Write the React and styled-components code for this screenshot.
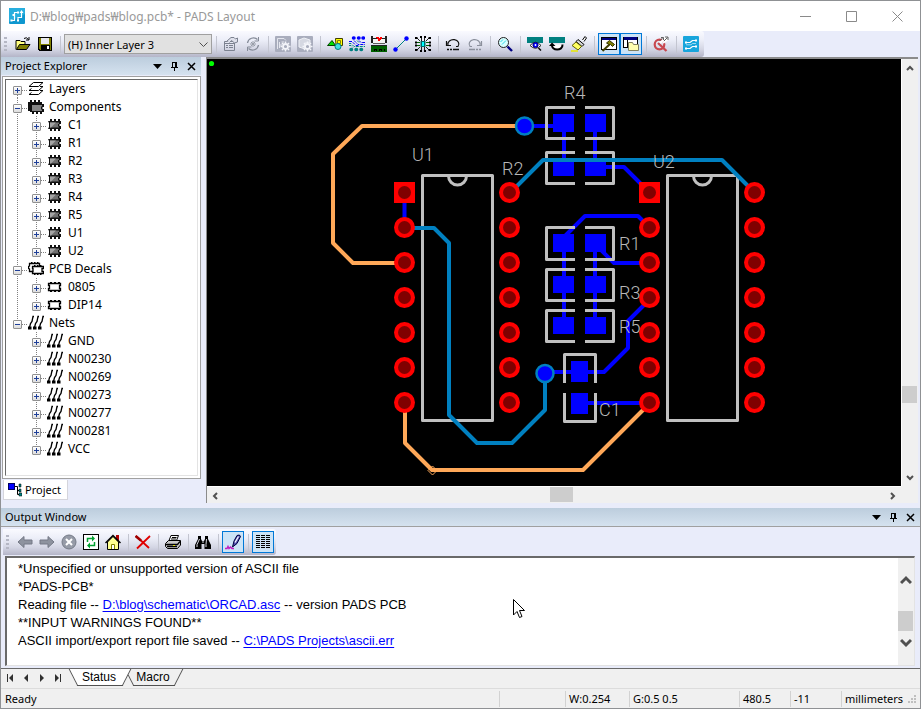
import React from 'react';
import styled, { createGlobalStyle } from 'styled-components';

const GlobalStyle = createGlobalStyle`
  * {
    box-sizing: border-box;
  }
  body {
    margin: 0;
    font-family: "Noto Sans", "Noto Sans CJK KR", sans-serif;
    font-size: 11px;
    color: #000000;
    background: #8f9194;
  }
  button {
    font: inherit;
    color: inherit;
    padding: 0;
    border: none;
    background: none;
  }
`;

const Window = styled.div`
  display: flex;
  flex-direction: column;
  min-height: 100vh;
  border: 1px solid #8f9194;
  background: #e9ecfa;
`;

/* ---------- title bar ---------- */

const TitleBar = styled.header`
  display: flex;
  align-items: center;
  height: 30px;
  padding-left: 8px;
  background: #ffffff;
`;

const Title = styled.h1`
  flex: 1;
  margin: 0 0 0 5px;
  font-size: 12px;
  font-weight: normal;
  color: #999999;
`;

const CaptionButton = styled.button`
  display: flex;
  align-items: center;
  justify-content: center;
  width: 46px;
  height: 30px;
  color: #8a8a8a;
`;

/* ---------- toolbars ---------- */

const ToolbarRow = styled.div`
  display: flex;
  height: 26px;
`;

const Toolbar = styled.div`
  display: flex;
  align-items: center;
  height: 26px;
  padding: 0 2px 0 3px;
  border-radius: 0 3px 3px 0;
  background: linear-gradient(#fafaff 0%, #eceef8 35%, #d4d6e4 70%, #b4b5c8 100%);
`;

const Grip = styled.span`
  width: 3px;
  height: 15px;
  margin: 0 5px 0 0;
  background: repeating-linear-gradient(#b5b7c4 0 2px, transparent 2px 4px);
`;

const ToolButton = styled.button`
  display: flex;
  align-items: center;
  justify-content: center;
  width: 22px;
  height: 22px;
  border: 1px solid ${props => (props.$pressed ? '#0078d7' : 'transparent')};
  background: ${props => (props.$pressed ? '#cce4f7' : 'transparent')};
`;

const Separator = styled.span`
  width: 1px;
  height: 17px;
  margin: 0 3px 0 4px;
  background: #c3c5d0;
`;

const LayerSelect = styled.select`
  width: 148px;
  height: 20px;
  padding: 0 20px 0 3px;
  border: 1px solid #a0a0a0;
  border-radius: 0;
  font: 11px "Noto Sans", sans-serif;
  color: #000000;
  appearance: none;
  background: #e1e1e1;
`;

const SelectBox = styled.label`
  display: grid;
  align-items: center;
  & > * {
    grid-area: 1 / 1;
  }
  & > svg {
    justify-self: end;
    margin-right: 4px;
    pointer-events: none;
  }
`;

/* ---------- docked panels ---------- */

const Workspace = styled.div`
  display: flex;
  flex: 1;
`;

const Explorer = styled.aside`
  display: flex;
  flex-direction: column;
  width: 200px;
  margin-right: 5px;
`;

const PanelHeader = styled.div`
  display: flex;
  align-items: center;
  height: 18px;
  padding: 0 1px 0 4px;
  background: linear-gradient(#bccddd, #d5e2ef);
`;

const PanelTitle = styled.h2`
  flex: 1;
  margin: 0;
  font-size: 11px;
  font-weight: normal;
  line-height: 16px;
`;

const PanelButton = styled.button`
  display: flex;
  align-items: center;
  justify-content: center;
  width: 17px;
  height: 17px;
`;

const TreeFrame = styled.div`
  flex: 1;
  margin: 1px 0 0 1px;
  padding: 2px;
  border: 1px solid #a0a0a0;
  background: #ffffff;
`;

const TreeList = styled.ul`
  height: 100%;
  margin: 0;
  padding: 0 0 0 2px;
  list-style: none;
  border: 1px solid #e3e3e3;
  border-top-color: #696969;
  border-left-color: #696969;
`;

const TreeRow = styled.li`
  display: flex;
  align-items: center;
  height: 18px;
  font-size: 12px;
  line-height: 18px;
`;

const dots = 'repeating-linear-gradient(#808080 0 1px, transparent 1px 2px)';
const dotsAcross = 'repeating-linear-gradient(90deg, #808080 0 1px, transparent 1px 2px)';

const Guide = styled.span`
  width: 19px;
  height: 18px;
  background: ${props => (props.$empty ? 'none' : `${dots} 9px 0 / 1px 18px no-repeat`)};
`;

const Branch = styled.span`
  display: flex;
  align-items: center;
  justify-content: center;
  width: 19px;
  height: 18px;
  margin-right: 1px;
  background:
    ${dotsAcross} 14px 10px / 5px 1px no-repeat,
    ${dots} 9px ${props => (props.$first ? 9 : 0)}px / 1px
      ${props => (props.$first || props.$last ? 9 : 18)}px no-repeat;
`;

const Expander = styled.button`
  display: flex;
  width: 9px;
  height: 9px;
  margin-top: 2px;
  border: 1px solid #919191;
  border-radius: 1px;
  background: linear-gradient(#ffffff, #dcdcdc);
`;

const TreeLabel = styled.span`
  margin-left: 5px;
`;

const ExplorerTabs = styled.div`
  display: flex;
  height: 24px;
  padding: 1px 0 3px 2px;
`;

const ExplorerTab = styled.button`
  display: flex;
  align-items: center;
  gap: 3px;
  width: 65px;
  padding-left: 4px;
  border: 1px solid #d5d5dc;
  border-top: none;
  background: #ffffff;
`;

/* ---------- board view ---------- */

const BoardFrame = styled.main`
  display: grid;
  grid-template-columns: 1fr 17px;
  grid-template-rows: 1fr 17px;
  flex: 1;
  min-width: 0;
  min-height: 440px;
  margin-right: 2px;
  border: 1px solid #8b8b8b;
  border-width: 2px 0 0 1px;
  background: #f0f0f0;
`;

const Board = styled.svg`
  display: block;
  width: 100%;
  height: 100%;
  background: #000000;
`;

const Silk = styled.text`
  font-family: Roboto, sans-serif;
  font-weight: 300;
  font-size: 18px;
  fill: #b8b8b8;
  stroke: none;
`;

const Scrollbar = styled.div`
  display: flex;
  flex-direction: ${props => (props.$across ? 'row' : 'column')};
  background: #f0f0f0;
  ${props => (props.$across ? 'border-top: 1px solid #ffffff;' : 'width: 17px; border-left: 1px solid #ffffff;')}
`;

const ScrollButton = styled.button`
  display: flex;
  align-items: center;
  justify-content: center;
  width: 16px;
  height: 17px;
  color: #505050;
`;

const ScrollGap = styled.span`
  flex: ${props => props.$share};
`;

const Thumb = styled.span`
  flex: 0 0 ${props => props.$size}px;
  ${props => (props.$across ? 'height: 15px;' : 'width: 15px;')}
  background: #cdcdcd;
`;

/* ---------- output window ---------- */

const Output = styled.section`
  margin-top: 5px;
`;

const OutputBody = styled.div`
  padding: 2px 5px 2px 2px;
  border-top: 1px solid #a0a0a0;
`;

const OutputFrame = styled.div`
  display: flex;
  height: 110px;
  margin: 1px 0 0 2px;
  border: 2px solid #696969;
  border-right: 1px solid #e3e3e3;
  border-bottom: 1px solid #e3e3e3;
  background: #ffffff;
`;

const Log = styled.div`
  flex: 1;
  padding: 2px 0 0 11px;
  font-family: "Liberation Sans", Arial, sans-serif;
  font-size: 13px;
  line-height: 18px;
`;

const LogLine = styled.p`
  margin: 0;
`;

const LogLink = styled.a`
  color: #0000ff;
  text-decoration: underline;
  text-underline-offset: 2px;
`;

const OutputScroll = styled(Scrollbar)`
  padding: 13px 0 14px;
`;

const TabStrip = styled.div`
  display: flex;
  height: 21px;
  padding-left: 1px;
  border-top: 1px solid #696969;
  border-bottom: 1px solid #dcdcdc;
  background: #f0f0f0;
`;

const TabNav = styled.button`
  display: flex;
  align-items: center;
  justify-content: center;
  width: 16px;
  height: 17px;
  color: #303030;
`;

const Tab = styled.button`
  position: relative;
  z-index: ${props => (props.$active ? 2 : 1)};
  width: ${props => (props.$active ? 56 : 52)}px;
  height: 16px;
  margin-left: ${props => (props.$active ? 5 : 0)}px;
  font-family: "Liberation Sans", Arial, sans-serif;
  font-size: 12px;
  line-height: 14px;

  &::before,
  &::after {
    content: "";
    position: absolute;
    z-index: -1;
    top: 0;
    height: 16px;
    border-bottom: 1px solid #505050;
    background: ${props => (props.$active ? '#ffffff' : '#f0f0f0')};
  }
  &::before {
    left: 2px;
    right: 40%;
    border-left: 1px solid #505050;
    transform: skewX(27deg);
  }
  &::after {
    left: 40%;
    right: 0;
    border-right: 1px solid #505050;
    transform: skewX(-27deg);
  }
`;

const StatusBar = styled.footer`
  display: flex;
  align-items: center;
  height: 19px;
  padding: 0 2px 0 4px;
  background: #f0f0f0;
`;

const StatusText = styled.span`
  flex: 1;
`;

const StatusCell = styled.span`
  width: ${props => props.$width}px;
  height: 16px;
  padding-left: 3px;
  border-left: 1px solid #d2d2d2;
  line-height: 16px;
  white-space: nowrap;
`;

const Pointer = styled.svg`
  position: absolute;
  left: 513px;
  top: 599px;
`;

/* ---------- icons ---------- */

const Icon = ({ size = 16, children, ...rest }) => (
  <svg width={size} height={size} viewBox={`0 0 ${size} ${size}`} fill="none" aria-hidden="true" {...rest}>
    {children}
  </svg>
);

const AppIcon = () => (
  <Icon>
    <rect width="16" height="16" rx="1" fill="#0e97cf" />
    <path d="M0 0H16V6L0 14Z" fill="#27aede" />
    <path d="M2 12.500H5.500V4.500H9M9 12.500V9.500H12.500V4" stroke="#ffffff" strokeWidth="1.200" />
    <path d="M10.500 5L12.500 2L14.500 5ZM3.500 6H5V8H3.500Z" fill="#ffffff" />
    <path d="M8 3.500H10V5.500H8ZM1.500 11.500H3.500V13.500H1.500ZM8 11.500H10V13.500H8Z" fill="#ffffff" />
  </Icon>
);

const OpenIcon = () => (
  <Icon>
    <path d="M1 13.500V4.500H5L6 5.500H10V8" fill="#ffff80" stroke="#000000" />
    <path d="M1.500 13.500L4.500 8.500H15L11.500 13.500Z" fill="#808000" stroke="#000000" />
    <path d="M9 2.500Q11.500 0.500 13.500 3.500M14 1V4H11" stroke="#000000" />
  </Icon>
);

const SaveIcon = () => (
  <Icon shapeRendering="crispEdges">
    <path d="M1 1H15V15H2L1 14Z" fill="#000000" />
    <path d="M2 2H4V8H12V2H14V14H3L2 13Z" fill="#808000" />
    <rect x="4" y="2" width="8" height="6" fill="#e8e8ee" />
    <rect x="4" y="9" width="9" height="5" fill="#000000" />
    <rect x="10" y="10" width="2" height="3" fill="#ffffff" />
  </Icon>
);

const PropsIcon = () => (
  <Icon>
    <path d="M1.500 5.500H11.500V14.500H1.500ZM1.500 7.500H11M3 9.500H5M6 9.500H10M3 11.500H5M6 11.500H10" stroke="#7c8290" />
    <path d="M4 5L8 1.500H11L12.500 3L14.500 2V6L11.500 7L8.500 4.500L6.500 6.500" fill="#dfe1ec" stroke="#7c8290" />
  </Icon>
);

const CycleIcon = () => (
  <Icon>
    <path d="M2.500 7A6 6 0 0 1 12.500 3.500M13.500 9A6 6 0 0 1 3.500 12.500" stroke="#858b98" strokeWidth="1.300" />
    <path d="M13.500 1V5H9.500M2.500 15V11H6.500" stroke="#858b98" />
    <path d="M8 5V11M5 8H11M6 6L10 10M10 6L6 10" stroke="#9a9faa" />
  </Icon>
);

const GearDocIcon = ({ box }) => (
  <Icon>
    <rect width="16" height="16" rx="1" fill="#a9adbd" />
    {box
      ? <path d="M2 4L7 2L13 4V7H8V13L2 11Z" fill="#d5d8e2" stroke="#eef0f6" />
      : <path d="M2.500 13V2.500H9L11 4.500M4.500 12V6M6.500 6H9M4.500 9H7" stroke="#e4e6ee" />}
    <circle cx="10.500" cy="10.500" r="2.500" fill="#a9adbd" stroke="#f4f5fa" strokeWidth="1.800" />
    <path d="M10.500 5.500V7M10.500 14V15.500M5.500 10.500H7M14 10.500H15.500M7 7L8 8M13 13L14 14M14 7L13 8M7 14L8 13" stroke="#f4f5fa" strokeWidth="1.500" />
  </Icon>
);

const ShapesIcon = () => (
  <Icon>
    <path d="M8.500 2.500H15.500V9.500H9Z" fill="#ffff00" stroke="#404000" />
    <path d="M10.500 4.500H13.500V7.500H10.500Z" stroke="#808000" />
    <path d="M0.500 9.500L5 4.500L8.500 9.500Z" fill="#00e000" stroke="#004000" />
    <circle cx="11" cy="10.500" r="3" fill="#40e0e0" stroke="#008080" />
  </Icon>
);

const RouteIcon = () => (
  <Icon>
    <path d="M4.500 2H5M9.500 2H10M14 2H14.500" stroke="#0000ff" strokeWidth="3.500" strokeLinecap="round" />
    <path d="M2 13.500H2.500M7 13.500H7.500M12 13.500H12.500" stroke="#008080" strokeWidth="3.500" strokeLinecap="round" />
    <path d="M0 5.500H3L7 9.500H10M5 4.500L9 8.500H16M10 4.500L12 6.500H16" stroke="#0000ff" strokeDasharray="3 1" />
    <path d="M0 7.500H2L5 10.500H16M0 9.500H2L4 11.500M8 4.500L10 6.500" stroke="#008080" strokeDasharray="3 1" />
  </Icon>
);

const LayersBoardIcon = () => (
  <Icon shapeRendering="crispEdges">
    <path d="M0 0H2V2H14V0H16V7H14V3H2V7H0Z" fill="#202020" />
    <path d="M2 3H14V7H2Z" fill="#f4f4f4" />
    <path d="M2 7H14V8H2Z" fill="#606060" />
    <path d="M5 1H7L8 2L9 1H11V2L9 4V5H7V4L5 2Z" fill="#ff0000" />
    <rect y="10" width="16" height="6" fill="#006000" />
    <path d="M3 15V13H5V15M8 15V13H10V15M13 13V15" stroke="#000000" />
    <path d="M0 9.500H16" stroke="#202020" />
  </Icon>
);

const ConnectIcon = () => (
  <Icon>
    <path d="M3 13L13 3" stroke="#008080" />
    <circle cx="2.500" cy="13.500" r="2.200" fill="#0000ff" />
    <circle cx="13.500" cy="2.500" r="2.200" fill="#0000ff" />
  </Icon>
);

const FanoutIcon = () => (
  <Icon>
    <path d="M5 5L2 2M6.500 5V1M9.500 5V1M11 5L14 2M5 11L2 14M6.500 11V15M9.500 11V15M11 11L14 14" stroke="#202020" />
    <path d="M5 6.500H1M5 9.500H1M11 6.500H15M11 9.500H15" stroke="#006000" />
    <path d="M0 1H2.500V3H0ZM13.500 1H16V3H13.500ZM0 13H2.500V15H0ZM13.500 13H16V15H13.500ZM0 5.500H2V7.500H0ZM0 8.500H2V10.500H0ZM14 5.500H16V7.500H14ZM14 8.500H16V10.500H14ZM5 0H7V2H5ZM9 0H11V2H9ZM5 14H7V16H5ZM9 14H11V16H9Z" fill="#000000" />
    <rect x="5.500" y="5" width="5" height="6" fill="#006868" />
    <rect x="7" y="6" width="2" height="4" fill="#00ffff" />
  </Icon>
);

const UndoIcon = ({ flip }) => (
  <Icon>
    <g transform={flip ? 'translate(16 0) scale(-1 1)' : undefined} stroke={flip ? '#8b909c' : '#101010'}>
      <path d="M3 9A5.500 4.500 0 1 1 13 10.500H11" strokeWidth="1.200" />
      <path d="M1.500 5V9.500H6" strokeWidth="1.200" />
      <path d="M2 13.500H4M5 13.500H7M8 13.500H14" strokeWidth="1.500" />
    </g>
  </Icon>
);

const ZoomIcon = () => (
  <Icon>
    <circle cx="6.500" cy="6.500" r="5" fill="#d8ffff" stroke="#202020" />
    <path d="M3.500 6L6 3.500M5 8.500L9 4.500" stroke="#30d8e8" />
    <path d="M10.500 10.500L15 15" stroke="#000080" strokeWidth="2.400" />
  </Icon>
);

const ViewBoardIcon = () => (
  <Icon>
    <path d="M0 1H16V7H0Z" fill="#008080" />
    <path d="M3 9.500Q8.500 3 14 9.500Q8.500 15 3 9.500Z" fill="#ffffff" stroke="#202020" />
    <circle cx="8.500" cy="9" r="2.600" fill="#0000ff" stroke="#000080" />
    <circle cx="8.500" cy="9" r="0.900" fill="#ffffff" />
    <path d="M11.500 12L14 14.500" stroke="#000000" strokeWidth="1.500" />
  </Icon>
);

const RotateBoardIcon = () => (
  <Icon>
    <path d="M0 1H16V7H0Z" fill="#008080" />
    <path d="M3 8.500C2 15 14 15.500 13.500 8.500" fill="#ffffff" stroke="#000000" strokeWidth="2" />
    <path d="M0 10L3 6.500L6.500 10Z" fill="#000000" />
  </Icon>
);

const BrushIcon = () => (
  <Icon>
    <path d="M11.500 4L14 0.500L15.500 2L13 5.500" fill="#ffffff" stroke="#000000" />
    <path d="M7 3.500L13 8.500L11 10.500L5 5.500Z" fill="#d8d8d8" stroke="#000000" />
    <path d="M5 6L10.500 10.500L7 14L1 9.500Z" fill="#ffff60" stroke="#606000" />
    <path d="M0 15H7" stroke="#e8e800" strokeWidth="1.500" />
  </Icon>
);

const HammerIcon = () => (
  <Icon>
    <rect x="0.500" y="1.500" width="15" height="12" fill="#ffffff" stroke="#000000" />
    <rect x="1" y="2" width="14" height="2" fill="#000080" />
    <path d="M5.500 7L8.500 4.500L13.500 8.500L11.500 10.500L9.500 8.500L8 8.500Z" fill="#808000" stroke="#303000" />
    <path d="M8.500 8.500L1.500 15" stroke="#404000" strokeWidth="2" />
  </Icon>
);

const ExplorerIcon = () => (
  <Icon>
    <rect x="0.500" y="1.500" width="14" height="10" fill="#ffffff" stroke="#000000" />
    <rect x="1" y="1" width="13" height="3" fill="#000080" />
    <path d="M4.500 4V11" stroke="#000000" />
    <path d="M5.500 14.500V6.500H9.500L10.500 8.500H15.500V14.500Z" fill="#ffffb0" stroke="#808060" />
  </Icon>
);

const QuickIcon = () => (
  <Icon>
    <circle cx="6.500" cy="8.500" r="4.800" stroke="#c84850" strokeWidth="2.200" />
    <path d="M5 7L13.500 15" stroke="#c84850" strokeWidth="2.400" />
    <path d="M7 7L13 1.500M10 7L15 3" stroke="#ffffff" strokeWidth="2" />
    <path d="M6.500 5L10 1.500M8 1.500H10.500V4M11 5L14.500 1.500M12 1H15V4" stroke="#606060" />
  </Icon>
);

const RouterIcon = () => (
  <Icon>
    <rect width="16" height="16" rx="1" fill="#18a5dc" />
    <path d="M3 6.500H7L9.500 4.500H13M3 12.500H7L9.500 10.500H13" stroke="#ffffff" strokeWidth="1.200" />
    <path d="M3 8.800H8L9.500 7.500H13" stroke="#bfe6f6" strokeWidth="0.800" />
    <path d="M2 5.500H4V7.500H2ZM12 3.500H14V5.500H12ZM2 11.500H4V13.500H2ZM12 9.500H14V11.500H12Z" fill="#ffffff" />
  </Icon>
);

const ArrowIcon = ({ flip }) => (
  <Icon>
    <path
      d="M1 8L7 2.500V6H15V10H7V13.500Z"
      fill="#8e939f"
      stroke="#747986"
      transform={flip ? 'translate(16 0) scale(-1 1)' : undefined}
    />
  </Icon>
);

const StopIcon = () => (
  <Icon>
    <circle cx="8" cy="8" r="7" fill="#969ba7" stroke="#757b87" />
    <path d="M5 5L11 11M11 5L5 11" stroke="#ffffff" strokeWidth="2" />
  </Icon>
);

const ReloadIcon = () => (
  <Icon>
    <rect x="0.500" y="0.500" width="15" height="15" fill="#ffffff" stroke="#000000" />
    <path d="M4.500 8V4.500H10M11.500 8V11.500H6" stroke="#00a030" strokeWidth="1.500" />
    <path d="M9 1.500L12 4.500L9 7.500ZM7 8.500L4 11.500L7 14.500Z" fill="#00a030" />
  </Icon>
);

const HomeIcon = () => (
  <Icon>
    <path d="M11 1H14V7H11Z" fill="#b00000" />
    <path d="M2.500 8V15.500H13.500V8L8 2.500Z" fill="#ffff90" stroke="#000000" />
    <path d="M0.500 9L8 1.500L15.500 9" stroke="#000000" strokeWidth="1.500" />
    <path d="M6.500 15V10.500H9.500V15" fill="#ffffff" stroke="#808000" />
  </Icon>
);

const DeleteIcon = () => (
  <Icon>
    <path d="M1 2L14 14M15 2L2 14.500" stroke="#e00000" strokeWidth="1.800" />
    <path d="M0.500 2L6 6.500" stroke="#a00000" strokeWidth="2.500" />
  </Icon>
);

const PrintIcon = () => (
  <Icon>
    <path d="M4 6.500L6 1.500H13.500L11.500 6.500Z" fill="#ffffff" stroke="#000000" />
    <path d="M7 3.500H11.500M6 5H11" stroke="#000000" />
    <path d="M0.500 9.500L3.500 6.500H15.500V11L12.500 14.500H2.500L0.500 12.500Z" fill="#c8c8c8" stroke="#000000" />
    <path d="M1 10.500H12.500L15 7.500M2 12.500H12" stroke="#000000" strokeWidth="1.300" />
    <path d="M8 11.500H10" stroke="#e0e000" />
  </Icon>
);

const FindIcon = () => (
  <Icon>
    <path d="M3 2H6V5L7 7H9L10 5V2H13V5L16 11V15H9.500V10H6.500V15H0V11L3 5Z" fill="#000000" />
    <path d="M4.500 5L2 10.500V13M11.500 5L11 10.500V13M8 7V9" stroke="#d8d8e0" />
  </Icon>
);

const PenIcon = () => (
  <Icon>
    <path d="M7.500 13L9 7L12 1.500Q15 0 15.500 2.500L12 9.500Z" fill="#5050b0" stroke="#000040" />
    <path d="M10 8.500L13.500 2.500" stroke="#ffffff" strokeWidth="1.300" />
    <path d="M0 14.500H2L3 12.500L4 14.500L5.500 13L7 14.500H9" stroke="#c020c0" strokeWidth="1.500" />
  </Icon>
);

const ListIcon = () => (
  <Icon shapeRendering="crispEdges">
    <path
      d="M1 1.500H15M1 3.500H15M1 5.500H15M1 7.500H15M1 9.500H15M1 11.500H15M1 13.500H15"
      stroke="#000000"
      strokeDasharray="4 1"
    />
  </Icon>
);

const Chevron = ({ dir, big }) => {
  const turn = { up: 0, right: 90, down: 180, left: 270 }[dir];
  return (
    <Icon size={big ? 12 : 8}>
      <path
        d={big ? 'M1 9L6 4L11 9' : 'M1 6L4 3L7 6'}
        stroke="currentColor"
        strokeWidth={big ? 3 : 2}
        transform={`rotate(${turn} ${big ? '6 6' : '4 4'})`}
      />
    </Icon>
  );
};

const LayersGlyph = () => (
  <Icon>
    <path d="M5.500 1.500H15L10.500 5.500H1Z" fill="#ffffff" stroke="#000000" />
    <path d="M3.500 7.500L1 9.500H10.500L15 5.500H12M3.500 11.500L1 13.500H10.500L15 9.500H12" stroke="#000000" />
  </Icon>
);

const ChipGlyph = ({ stacked }) => (
  <Icon>
    {stacked ? (
      <>
        <path d="M0 3H2V1H4V3H6V1H8V3H10V1H12V3H13V12H0Z" fill="#101010" />
        <path d="M2 5H16V8H14.500V10H16V13H2Z" fill="#101010" />
        <path d="M4 6H14V7.500H13V10.500H14V12H4Z" fill="#868686" />
        <path d="M4 3H6V5H4ZM8 3H10V5H8ZM12 3H14V5H12ZM4 13H6V15H4ZM8 13H10V15H8ZM12 13H14V15H12Z" fill="#101010" />
      </>
    ) : (
      <>
        <path d="M1 4H14V7H12.500V9H14V12H1L2 10V6Z" fill="#101010" />
        <path d="M3 5.500H12V7H11V9.500H12V10.500H3Z" fill="#707070" />
        <path d="M3 5.500H9L4 10.500H3Z" fill="#a4a4a4" />
        <path d="M3 2H5V4H3ZM7 2H9V4H7ZM11 2H13V4H11ZM3 12H5V14H3ZM7 12H9V14H7ZM11 12H13V14H11Z" fill="#101010" />
      </>
    )}
  </Icon>
);

const DecalGlyph = ({ stacked }) => (
  <Icon>
    {stacked && (
      <>
        <path d="M1.500 2.500H11.500V10.500H1.500V8L0.500 7.500V5.500L1.500 5Z" fill="#ffffff" stroke="#000000" strokeWidth="1.300" />
        <path d="M3 1H4.500V2H3ZM6 1H7.500V2H6ZM9 1H10.500V2H9Z" fill="#000000" />
      </>
    )}
    <path
      d={stacked
        ? 'M4.500 5.500H15.500V7.500H14V10.500H15.500V12.500H4.500V10.500H5V7.500H4.500Z'
        : 'M1.500 4.500H13.500V6.500H12.500V9.500H13.500V11.500H1.500V9.500H2.500V6.500H1.500Z'}
      fill="#ffffff"
      stroke="#000000"
      strokeWidth="1.300"
    />
    <path
      d={stacked
        ? 'M6 4H7.500V5H6ZM9 4H10.500V5H9ZM12 4H13.500V5H12ZM6 13H7.500V14H6ZM9 13H10.500V14H9ZM12 13H13.500V14H12Z'
        : 'M3 3H5V4H3ZM7 3H9V4H7ZM11 3H13V4H11ZM3 12H5V13H3ZM7 12H9V13H7ZM11 12H13V13H11Z'}
      fill="#000000"
    />
  </Icon>
);

const NetGlyph = () => (
  <Icon>
    <path d="M6 1.500H5L4 6.500L2.500 8.500L1.500 12.500M11 1.500H10L9 6.500L7.500 8.500L6.500 12.500M16 1.500H15L14 6.500L12.500 8.500L11.500 12.500" stroke="#000000" strokeWidth="1.300" />
    <path d="M0 11.500H3.500V14.500H0ZM5 11.500H8.500V14.500H5ZM10 11.500H13.500V14.500H10Z" fill="#000000" />
  </Icon>
);

const PinIcon = () => (
  <Icon size={9} shapeRendering="crispEdges">
    <path d="M2 0H7V5H8V6H5V9H4V6H1V5H2ZM3 1V5H5V1Z" fill="#000000" fillRule="evenodd" />
  </Icon>
);

const PanelButtons = () => (
  <>
    <PanelButton aria-label="Menu">
      <Icon size={9}><path d="M0 2H9L4.500 7Z" fill="#000000" /></Icon>
    </PanelButton>
    <PanelButton aria-label="Auto hide"><PinIcon /></PanelButton>
    <PanelButton aria-label="Close">
      <Icon size={9}><path d="M1 1L8 8M8 1L1 8" stroke="#000000" strokeWidth="1.500" /></Icon>
    </PanelButton>
  </>
);

/* ---------- data ---------- */

const toolGroups = [
  [['Properties', <PropsIcon />], ['Cycle', <CycleIcon />]],
  [['Design options', <GearDocIcon />], ['Part options', <GearDocIcon box />]],
  [
    ['Drafting', <ShapesIcon />],
    ['Design', <RouteIcon />],
    ['Dimensioning', <LayersBoardIcon />],
    ['ECO', <ConnectIcon />],
    ['BGA', <FanoutIcon />],
  ],
  [['Undo', <UndoIcon />], ['Redo', <UndoIcon flip />]],
  [['Zoom', <ZoomIcon />]],
  [['View board', <ViewBoardIcon />], ['Redraw', <RotateBoardIcon />], ['Highlight', <BrushIcon />]],
  [['Output window', <HammerIcon />, true], ['Project explorer', <ExplorerIcon />, true]],
  [['Quick link', <QuickIcon />]],
  [['Router', <RouterIcon />]],
];

const outputGroups = [
  [
    ['Back', <ArrowIcon />],
    ['Forward', <ArrowIcon flip />],
    ['Stop', <StopIcon />],
    ['Refresh', <ReloadIcon />],
    ['Home', <HomeIcon />],
  ],
  [['Delete', <DeleteIcon />]],
  [['Print', <PrintIcon />]],
  [['Find', <FindIcon />]],
  [['Record', <PenIcon />, true]],
  [['Log', <ListIcon />, true]],
];

const tree = [
  { name: 'Layers', icon: <LayersGlyph /> },
  {
    name: 'Components',
    icon: <ChipGlyph stacked />,
    childIcon: <ChipGlyph />,
    items: ['C1', 'R1', 'R2', 'R3', 'R4', 'R5', 'U1', 'U2'],
  },
  { name: 'PCB Decals', icon: <DecalGlyph stacked />, childIcon: <DecalGlyph />, items: ['0805', 'DIP14'] },
  {
    name: 'Nets',
    icon: <NetGlyph />,
    childIcon: <NetGlyph />,
    items: ['GND', 'N00230', 'N00269', 'N00273', 'N00277', 'N00281', 'VCC'],
  },
];

const pinRows = [192.5, 227.5, 262.5, 297.5, 332.5, 367.5, 402.5];

// horizontal 0805 parts: outline top and bottom, pad top and bottom
const resistors = [
  [107.5, 138.5, 114, 132],
  [152.5, 183.5, 158, 176],
  [227.5, 259.5, 234, 252],
  [269.5, 300.5, 276, 293],
  [310.5, 341.5, 317, 334],
];

const refs = [
  ['R4', 564, 99],
  ['U1', 412, 161],
  ['R2', 502, 175],
  ['U2', 653, 168],
  ['R1', 619, 250],
  ['R3', 619, 299],
  ['R5', 619, 333],
  ['C1', 599, 416],
];

/* ---------- parts ---------- */

const ToolGroups = ({ groups }) =>
  groups.map((group, i) => (
    <React.Fragment key={i}>
      {i > 0 && <Separator />}
      {group.map(([label, icon, pressed]) => (
        <ToolButton key={label} aria-label={label} $pressed={pressed}>{icon}</ToolButton>
      ))}
    </React.Fragment>
  ));

const Toggle = ({ name, open }) => (
  <Expander aria-label={`Toggle ${name}`}>
    <Icon size={7}>
      <path d={open ? 'M1 3.500H6' : 'M1 3.500H6M3.500 1V6'} stroke="#1f3f98" />
    </Icon>
  </Expander>
);

const Tree = () => (
  <TreeList>
    {tree.map((node, i) => (
      <React.Fragment key={node.name}>
        <TreeRow>
          <Branch $first={i === 0} $last={i === tree.length - 1}>
            <Toggle name={node.name} open={!!node.items} />
          </Branch>
          {node.icon}
          <TreeLabel>{node.name}</TreeLabel>
        </TreeRow>
        {(node.items || []).map((item, j) => (
          <TreeRow key={item}>
            <Guide $empty={i === tree.length - 1} />
            <Branch $last={j === node.items.length - 1}>
              <Toggle name={item} />
            </Branch>
            {node.childIcon}
            <TreeLabel>{item}</TreeLabel>
          </TreeRow>
        ))}
      </React.Fragment>
    ))}
  </TreeList>
);

const Pin = ({ x, y, square }) => (
  <g>
    {square
      ? <rect x={x - 10.5} y={y - 10.5} width="21" height="21" fill="#ff0000" />
      : <circle cx={x} cy={y} r="10.500" fill="#ff0000" />}
    <circle cx={x} cy={y} r="6.500" fill="#800000" />
  </g>
);

const Dip = ({ x }) => (
  <path d={`M${x} 175.500H${x + 70}V420.500H${x}ZM${x + 26} 176A9 9 0 0 0 ${x + 44} 176`} />
);

const BoardView = () => (
  <Board role="img" aria-label="Board layout">
    <circle cx="4.500" cy="4.500" r="2.600" fill="#00ff00" />
    <g transform="translate(-207 -59)" fill="none">
      <g stroke="#0000ff" strokeWidth="4" strokeLinejoin="round">
        <path d="M524 126H564V160M595 126V160M600 167H624L649 192M404.500 192V228" />
        <path d="M564 237L585 216H638L650 228M595 244L614 263H650M564 244V320M595 244V320" />
        <path d="M545 372H604L628 348V321L650 299M580 403H650" />
      </g>
      <g fill="#0000ff">
        {resistors.map(([, , top, bottom]) => (
          <React.Fragment key={top}>
            <rect x="553" y={top} width="21" height={bottom - top} />
            <rect x="585" y={top} width="21" height={bottom - top} />
          </React.Fragment>
        ))}
        <rect x="571" y="361" width="17" height="21" />
        <rect x="571" y="393" width="17" height="21" />
      </g>
      <g stroke="#c0c0c0" strokeWidth="3" strokeLinejoin="round">
        {resistors.map(([top, bottom]) => (
          <path key={top} d={`M575 ${top}H546.500V${bottom}H575M585 ${top}H613.500V${bottom}H585`} />
        ))}
        <path d="M564.500 383V354.500H595.500V383M564.500 393V421.500H595.500V393" />
        <Dip x={422.5} />
        <Dip x={667.5} />
      </g>
      <g stroke="#0080c0" strokeWidth="4" strokeLinejoin="round">
        <path d="M404 228H434L449 243V415L477 443H512L545 410V374" />
        <path d="M510 193L543 160H722L754 192" />
      </g>
      <g stroke="#ffa858" strokeWidth="4" strokeLinejoin="round">
        <path d="M524 126H362L333 154V243L353 263H404" />
        <path d="M405 403V443L432 470H583L650 403" />
        <path d="M428 470.500L432.500 466L437 470.500L432.500 475Z" strokeWidth="1" />
      </g>
      <g fill="#0000ff" stroke="#0080c0" strokeWidth="2.500">
        <circle cx="524.500" cy="126" r="8.500" />
        <circle cx="545" cy="373.500" r="8.500" />
      </g>
      {[404.5, 509.5, 649.5, 754.5].map((x, col) =>
        pinRows.map((y, row) => <Pin key={`${x}-${y}`} x={x} y={y} square={row === 0 && col % 2 === 0} />)
      )}
      {refs.map(([name, x, y]) => (
        <Silk key={name} x={x} y={y}>{name}</Silk>
      ))}
    </g>
  </Board>
);

export default function App() {
  return (
    <Window>
      <GlobalStyle />
      <TitleBar>
        <AppIcon />
        <Title>D:₩blog₩pads₩blog.pcb* - PADS Layout</Title>
        <CaptionButton aria-label="Minimize">
          <Icon size={11}><path d="M0 5.500H11" stroke="currentColor" /></Icon>
        </CaptionButton>
        <CaptionButton aria-label="Maximize">
          <Icon size={11}><path d="M0.500 0.500H10.500V10.500H0.500Z" stroke="currentColor" /></Icon>
        </CaptionButton>
        <CaptionButton aria-label="Close">
          <Icon size={11}><path d="M0.500 0.500L10.500 10.500M10.500 0.500L0.500 10.500" stroke="currentColor" /></Icon>
        </CaptionButton>
      </TitleBar>

      <ToolbarRow>
        <Toolbar>
          <Grip />
          <ToolButton aria-label="Open"><OpenIcon /></ToolButton>
          <ToolButton aria-label="Save"><SaveIcon /></ToolButton>
          <Separator />
          <SelectBox>
            <LayerSelect aria-label="Layer" defaultValue="3">
              <option value="3">(H) Inner Layer 3</option>
            </LayerSelect>
            <Icon size={9}><path d="M0.500 2.500L4.500 6.500L8.500 2.500" stroke="#505050" /></Icon>
          </SelectBox>
          <Separator />
          <ToolGroups groups={toolGroups} />
        </Toolbar>
      </ToolbarRow>

      <Workspace>
        <Explorer>
          <PanelHeader>
            <PanelTitle>Project Explorer</PanelTitle>
            <PanelButtons />
          </PanelHeader>
          <TreeFrame>
            <Tree />
          </TreeFrame>
          <ExplorerTabs>
            <ExplorerTab>
              <Icon size={14}>
                <rect x="0.500" y="0.500" width="6" height="6" fill="#0000ff" stroke="#000060" />
                <path d="M7 3.500H9.500V11.500H11M9.500 7.500H11" stroke="#000000" />
                <path d="M11 1H13V4H11ZM11 6H13V9H11ZM11 10H14V13H11Z" fill="#008080" stroke="#000000" strokeWidth="0.500" />
              </Icon>
              Project
            </ExplorerTab>
          </ExplorerTabs>
        </Explorer>

        <BoardFrame>
          <BoardView />
          <Scrollbar>
            <ScrollButton aria-label="Scroll up"><Chevron dir="up" /></ScrollButton>
            <ScrollGap $share={310} />
            <Thumb $size={17} />
            <ScrollGap $share={66} />
            <ScrollButton aria-label="Scroll down"><Chevron dir="down" /></ScrollButton>
          </Scrollbar>
          <Scrollbar $across>
            <ScrollButton aria-label="Scroll left"><Chevron dir="left" /></ScrollButton>
            <ScrollGap $share={327} />
            <Thumb $across $size={23} />
            <ScrollGap $share={312} />
            <ScrollButton aria-label="Scroll right"><Chevron dir="right" /></ScrollButton>
          </Scrollbar>
        </BoardFrame>
      </Workspace>

      <Output>
        <PanelHeader>
          <PanelTitle>Output Window</PanelTitle>
          <PanelButtons />
        </PanelHeader>
        <OutputBody>
          <ToolbarRow>
            <Toolbar>
              <Grip />
              <ToolGroups groups={outputGroups} />
            </Toolbar>
          </ToolbarRow>
          <OutputFrame>
            <Log>
              <LogLine>*Unspecified or unsupported version of ASCII file</LogLine>
              <LogLine>*PADS-PCB*</LogLine>
              <LogLine>
                Reading file -- <LogLink href="#orcad">D:\blog\schematic\ORCAD.asc</LogLink> -- version PADS PCB
              </LogLine>
              <LogLine>**INPUT WARNINGS FOUND**</LogLine>
              <LogLine>
                ASCII import/export report file saved -- <LogLink href="#err">C:\PADS Projects\ascii.err</LogLink>
              </LogLine>
            </Log>
            <OutputScroll>
              <ScrollButton aria-label="Scroll up"><Chevron dir="up" big /></ScrollButton>
              <ScrollGap $share={22} />
              <Thumb $size={20} />
              <ScrollGap $share={3} />
              <ScrollButton aria-label="Scroll down"><Chevron dir="down" big /></ScrollButton>
            </OutputScroll>
          </OutputFrame>
        </OutputBody>
        <TabStrip>
          <TabNav aria-label="First tab"><Icon size={8}><path d="M1 0V8H2V0ZM7 0V8L3 4Z" fill="currentColor" /></Icon></TabNav>
          <TabNav aria-label="Previous tab"><Icon size={8}><path d="M6 0V8L2 4Z" fill="currentColor" /></Icon></TabNav>
          <TabNav aria-label="Next tab"><Icon size={8}><path d="M2 0V8L6 4Z" fill="currentColor" /></Icon></TabNav>
          <TabNav aria-label="Last tab"><Icon size={8}><path d="M1 0V8L5 4ZM6 0V8H7V0Z" fill="currentColor" /></Icon></TabNav>
          <Tab $active>Status</Tab>
          <Tab>Macro</Tab>
        </TabStrip>
      </Output>

      <StatusBar>
        <StatusText>Ready</StatusText>
        <StatusCell $width={66} />
        <StatusCell $width={64}>W:0.254</StatusCell>
        <StatusCell $width={110}>G:0.5 0.5</StatusCell>
        <StatusCell $width={51}>480.5</StatusCell>
        <StatusCell $width={51}>-11</StatusCell>
        <StatusCell $width={65}>millimeters</StatusCell>
        <Icon size={12}>
          <path d="M8 2H10V4H8ZM5 5H7V7H5ZM8 5H10V7H8ZM2 8H4V10H2ZM5 8H7V10H5ZM8 8H10V10H8Z" fill="#bfbfbf" />
        </Icon>
      </StatusBar>

      <Pointer width="12" height="20" viewBox="0 0 12 20" aria-hidden="true">
        <path d="M0.500 0.500V16L4 12.500L6.500 18.500L9 17.500L6.500 11.500H11.500Z" fill="#ffffff" stroke="#000000" />
      </Pointer>
    </Window>
  );
}
